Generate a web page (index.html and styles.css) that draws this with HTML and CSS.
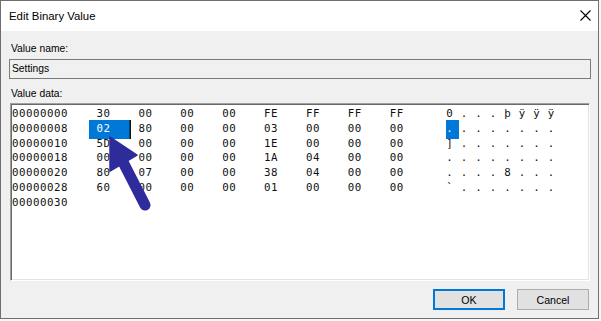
FILE: index.html
```html
<!DOCTYPE html>
<html>
<head>
<meta charset="utf-8">
<link rel="stylesheet" href="styles.css">
</head>
<body>
<div class="window">
  <div class="titlebar">
    <span class="title">Edit Binary Value</span>
    <svg class="close" width="11" height="11" viewBox="0 0 11 11"><path d="M0.5 0.5 L10.5 10.5 M10.5 0.5 L0.5 10.5" stroke="#000" stroke-width="1.1" fill="none"/></svg>
  </div>
  <div class="content">
    <div class="label">Value name:</div>
    <div class="textbox">Settings</div>
    <div class="label label-data">Value data:</div>
    <div class="hexbox">
      <div class="row"><span class="addr">00000000</span><span class="cell">30</span><span class="cell">00</span><span class="cell">00</span><span class="cell">00</span><span class="cell">FE</span><span class="cell">FF</span><span class="cell">FF</span><span class="cell">FF</span><span class="gap"></span><span class="ascii"><span>0</span><span>.</span><span>.</span><span>.</span><span>þ</span><span>ÿ</span><span>ÿ</span><span>ÿ</span></span></div>
      <div class="row"><span class="addr">00000008</span><span class="cell sel">02</span><span class="cell">80</span><span class="cell">00</span><span class="cell">00</span><span class="cell">03</span><span class="cell">00</span><span class="cell">00</span><span class="cell">00</span><span class="gap"></span><span class="ascii"><span class="asel">.</span><span>.</span><span>.</span><span>.</span><span>.</span><span>.</span><span>.</span><span>.</span></span></div>
      <div class="row"><span class="addr">00000010</span><span class="cell">5D</span><span class="cell">00</span><span class="cell">00</span><span class="cell">00</span><span class="cell">1E</span><span class="cell">00</span><span class="cell">00</span><span class="cell">00</span><span class="gap"></span><span class="ascii"><span>]</span><span>.</span><span>.</span><span>.</span><span>.</span><span>.</span><span>.</span><span>.</span></span></div>
      <div class="row"><span class="addr">00000018</span><span class="cell">00</span><span class="cell">00</span><span class="cell">00</span><span class="cell">00</span><span class="cell">1A</span><span class="cell">04</span><span class="cell">00</span><span class="cell">00</span><span class="gap"></span><span class="ascii"><span>.</span><span>.</span><span>.</span><span>.</span><span>.</span><span>.</span><span>.</span><span>.</span></span></div>
      <div class="row"><span class="addr">00000020</span><span class="cell">80</span><span class="cell">07</span><span class="cell">00</span><span class="cell">00</span><span class="cell">38</span><span class="cell">04</span><span class="cell">00</span><span class="cell">00</span><span class="gap"></span><span class="ascii"><span>.</span><span>.</span><span>.</span><span>.</span><span>8</span><span>.</span><span>.</span><span>.</span></span></div>
      <div class="row"><span class="addr">00000028</span><span class="cell">60</span><span class="cell">00</span><span class="cell">00</span><span class="cell">00</span><span class="cell">01</span><span class="cell">00</span><span class="cell">00</span><span class="cell">00</span><span class="gap"></span><span class="ascii"><span>`</span><span>.</span><span>.</span><span>.</span><span>.</span><span>.</span><span>.</span><span>.</span></span></div>
      <div class="row"><span class="addr">00000030</span></div>
    </div>
    <div class="buttons">
      <button class="btn btn-default">OK</button>
      <button class="btn">Cancel</button>
    </div>
  </div>
  <svg class="arrow" width="599" height="319" viewBox="0 0 599 319">
    <path d="M123 162 L145 205" stroke="#2e2c9b" stroke-width="11" stroke-linecap="round" fill="none"/>
    <path d="M110 137 L137 155 L110 171 Z" fill="#2e2c9b" stroke="#2e2c9b" stroke-width="1.5" stroke-linejoin="round"/>
  </svg>
</div>
</body>
</html>
```

FILE: styles.css
```css
html, body {
  margin: 0;
  padding: 0;
}
body {
  background: #f7f7f7;
  width: 601px;
  height: 321px;
  overflow: hidden;
}
.window {
  position: relative;
  width: 599px;
  height: 319px;
  box-sizing: border-box;
  border: 1px solid #6f6f6f;
  background: #f0f0f0;
  display: flex;
  flex-direction: column;
  font-family: "Liberation Sans", Arial, sans-serif;
  color: #000;
}
.titlebar {
  height: 30px;
  flex: none;
  background: #fff;
  display: flex;
  align-items: center;
  padding-left: 8px;
  padding-right: 7px;
}
.title {
  font-size: 11.4px;
  flex: 1;
}
.close {
  align-self: flex-start;
  margin-top: 9px;
}
.content {
  padding: 0 7px 0 8px;
  display: flex;
  flex-direction: column;
}
.label {
  font-size: 10.3px;
  line-height: 13px;
  height: 13px;
  padding-left: 2px;
  margin-top: 11px;
}
.label-data {
  margin-top: 8px;
}
.textbox {
  margin-top: 4px;
  height: 20px;
  box-sizing: border-box;
  border: 1px solid #7a7a7a;
  background: #f0f0f0;
  font-size: 10.3px;
  line-height: 18px;
  padding-left: 2px;
}
.hexbox {
  margin: 3px 1px 0 1px;
  height: 178px;
  box-sizing: border-box;
  background: #fff;
  border-top: 1px solid #a0a0a0;
  border-left: 1px solid #a0a0a0;
  border-bottom: 1px solid #ffffff;
  border-right: 1px solid #ffffff;
  box-shadow: inset 1px 1px 0 #696969, inset -1px -1px 0 #e3e3e3;
  padding: 1px;
  font-family: "DejaVu Sans Mono", "Liberation Mono", monospace;
  font-size: 10.8px;
  letter-spacing: 0.5px;
  line-height: 18.7px;
  color: #111;
}
.row {
  display: grid;
  grid-template-columns: 77px repeat(8, 41.9px) 22px auto;
  height: 14.83px;
  white-space: pre;
}
.cell {
  padding-left: 7.5px;
}
.sel {
  background: #0078d7;
  color: #fff;
  box-shadow: inset -1.5px 0 0 #111;
}
.ascii {
  display: flex;
}
.ascii span {
  width: 14.5px;
  flex: none;
}
.ascii .asel {
  width: 13px;
  margin-right: 1.5px;
  background: #0078d7;
  color: #fff;
}
.buttons {
  margin-top: 8px;
  margin-right: 2px;
  display: flex;
  justify-content: flex-end;
  gap: 12px;
}
.btn {
  width: 72px;
  height: 21px;
  box-sizing: border-box;
  margin: 0;
  padding: 0;
  background: #e1e1e1;
  border: 1px solid #adadad;
  font-family: "Liberation Sans", Arial, sans-serif;
  font-size: 10.6px;
  color: #000;
}
.btn-default {
  border-color: #0078d7;
  box-shadow: inset 0 0 0 1px #0078d7;
}
.arrow {
  position: absolute;
  left: -1px;
  top: -1px;
  pointer-events: none;
}
```
